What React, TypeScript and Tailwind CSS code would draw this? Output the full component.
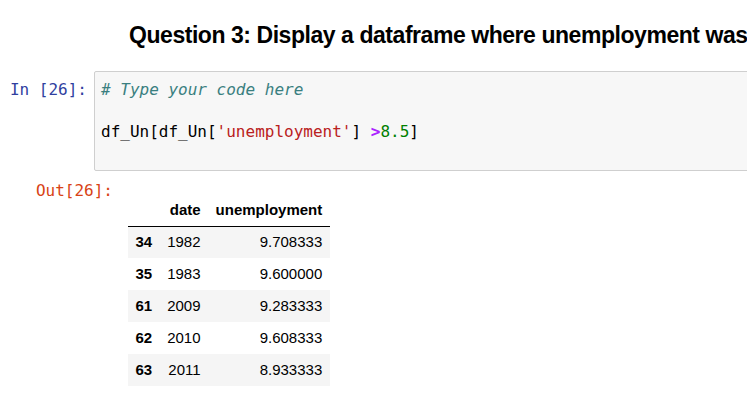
import React from "react";

const mono = { fontFamily: '"DejaVu Sans Mono", "Liberation Mono", monospace' };
const sans = { fontFamily: '"Liberation Sans", Arial, sans-serif' };

const rows = [
  { i: "34", d: "1982", u: "9.708333" },
  { i: "35", d: "1983", u: "9.600000" },
  { i: "61", d: "2009", u: "9.283333" },
  { i: "62", d: "2010", u: "9.608333" },
  { i: "63", d: "2011", u: "8.933333" },
];

export default function App() {
  return (
    <div className="w-[747px] h-[416px] overflow-hidden bg-white relative">
      <div
        className="pt-[22px] pl-[129px] whitespace-nowrap text-[23px] font-bold text-black leading-[26px] tracking-[-0.45px]"
        style={sans}
      >
        Question 3: Display a dataframe where unemployment was
      </div>

      <div className="flex mt-[23px]">
        <div
          className="w-[94px] shrink-0 pr-[7px] pt-[8px] text-right text-[16px] leading-[21px] text-[#303F9F] whitespace-pre"
          style={mono}
        >
          In [26]:
        </div>
        <div className="w-[700px] shrink-0 h-[100px] border border-[#cfcfcf] bg-[#f7f7f7] rounded-[2px] pl-[6px] pt-[7px]">
          <div className="text-[16px] leading-[21px] text-black whitespace-pre" style={mono}>
            <div className="italic text-[#3a7f80]"># Type your code here</div>
            <div>&nbsp;</div>
            <div>
              df_Un[df_Un[<span className="text-[#BA2121]">'unemployment'</span>]{" "}
              <span className="text-[#AA22FF] font-bold">&gt;</span>
              <span className="text-[#008000]">8.5</span>]
            </div>
            <div>&nbsp;</div>
          </div>
        </div>
      </div>

      <div className="flex mt-[9px]">
        <div
          className="w-[113px] shrink-0 text-right text-[16px] leading-[21px] text-[#D84315] whitespace-pre"
          style={mono}
        >
          Out[26]:
        </div>
        <div className="ml-[15px] mt-[15px]">
          <table className="border-collapse text-[15px] text-black" style={sans}>
            <thead>
              <tr className="border-b border-black">
                <th className="h-[31px] px-[7.5px] text-right font-bold"></th>
                <th className="h-[31px] px-[7.5px] text-right font-bold">date</th>
                <th className="h-[31px] px-[7.5px] text-right font-bold">unemployment</th>
              </tr>
            </thead>
            <tbody>
              {rows.map((r, k) => (
                <tr key={r.i} className={k % 2 === 0 ? "bg-[#f5f5f5]" : "bg-white"}>
                  <th className="h-[32px] px-[7.5px] text-right font-bold">{r.i}</th>
                  <td className="h-[32px] px-[7.5px] text-right">{r.d}</td>
                  <td className="h-[32px] px-[7.5px] text-right">{r.u}</td>
                </tr>
              ))}
            </tbody>
          </table>
        </div>
      </div>
    </div>
  );
}
